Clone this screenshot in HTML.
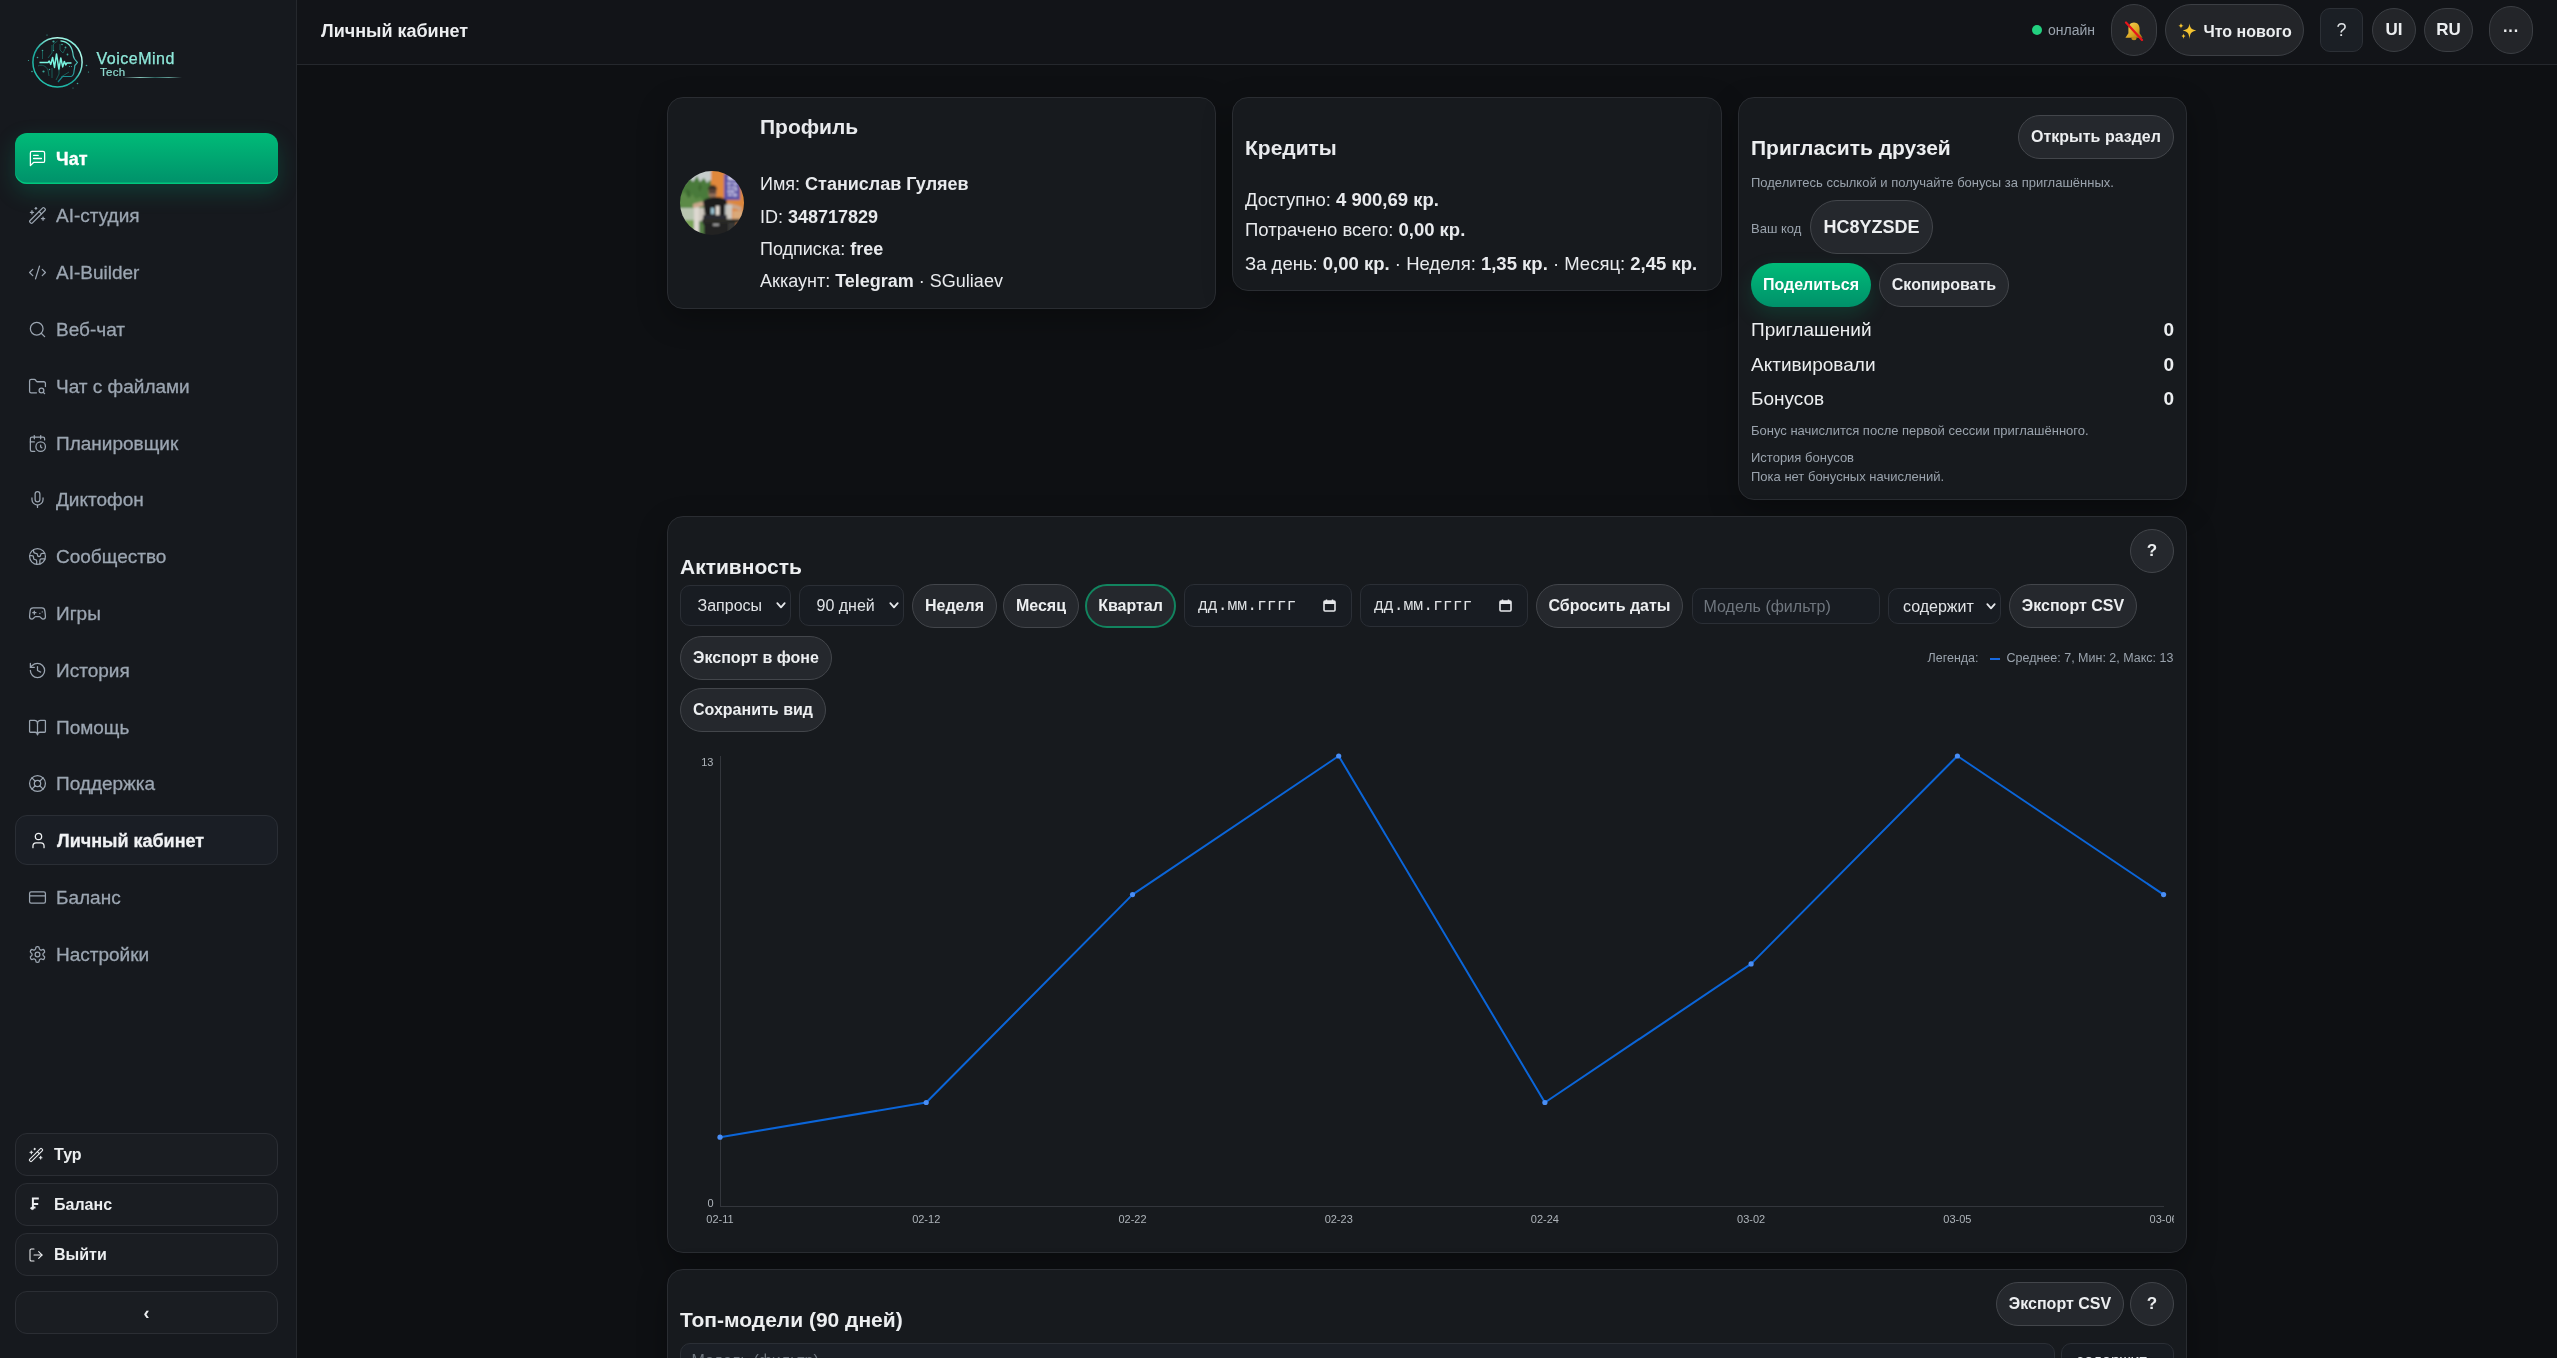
<!DOCTYPE html>
<html lang="ru">
<head>
<meta charset="utf-8">
<title>Личный кабинет</title>
<style>
*{box-sizing:border-box;margin:0;padding:0}
html,body{width:2557px;height:1358px;overflow:hidden}
body{-webkit-font-smoothing:antialiased;will-change:transform;background:#0e1013;font-family:"Liberation Sans",sans-serif;color:#e6e8eb;position:relative}
.abs{position:absolute}
#side{position:absolute;left:0;top:0;width:297px;height:1358px;background:#16191e;border-right:1px solid #25282d}
#head{position:absolute;left:297px;top:0;width:2260px;height:65px;background:#121418;border-bottom:1px solid #25282d}
.nav{position:absolute;left:15px;width:263px;height:50px;display:flex;align-items:center;font-size:19px;color:#9ba5b1;border-radius:12px}
.nav svg{position:absolute;left:13px;width:19px;height:19px;fill:none;stroke:currentColor;stroke-width:1.6;stroke-linecap:round;stroke-linejoin:round}
.nav span{position:absolute;left:41px;top:16px;line-height:1;white-space:nowrap;-webkit-text-stroke:.3px currentColor}
.nav.green span{top:16.5px}
.nav.act span{top:15.5px}
.nav.green{height:51px;background:linear-gradient(#00bb78,#00916a);color:#fff;font-weight:bold;font-size:18px;box-shadow:0 8px 22px rgba(0,170,120,.24),inset 0 -1.5px 0 #00c77d}
.nav.act{background:#1a1e25;border:1px solid #2a2e35;color:#f0f2f4;font-weight:bold;font-size:18px}
.sbtn{position:absolute;left:15px;width:263px;height:43px;border:1px solid #2b2e34;background:#1a1d22;border-radius:12px;color:#eceef0;font-weight:bold;font-size:16px}
.sbtn svg{position:absolute;left:12px;top:13px;width:16px;height:16px;fill:none;stroke:currentColor;stroke-width:1.6;stroke-linecap:round;stroke-linejoin:round}
.sbtn span{position:absolute;left:38px;top:12.5px;line-height:1;white-space:nowrap}
.card{position:absolute;background:#171a1e;border:1px solid #2a2d32;border-radius:16px;box-shadow:0 10px 30px rgba(0,0,0,.3)}
.pill{position:absolute;height:44px;border-radius:22px;background:#25282d;border:1px solid #43464b;color:#eceef0;font-weight:bold;font-size:16px;display:flex;align-items:center;justify-content:center;white-space:nowrap}
.sel{position:absolute;height:40px;border-radius:10px;background:#181c22;border:1px solid #2b2f36;color:#e0e3e6;font-size:16px;display:flex;align-items:center;white-space:nowrap}
.t{position:absolute;white-space:nowrap}
</style>
</head>
<body>
<div id="side"></div>
<div id="head"></div>
<svg class="abs" style="left:25px;top:30px" width="70" height="65" viewBox="0 0 70 65">
<defs><linearGradient id="lg1" x1="0.1" y1="1" x2="0.9" y2="0"><stop offset="0" stop-color="#27c9b4"/><stop offset=".45" stop-color="#1aa79b"/><stop offset=".8" stop-color="#b8fff0"/><stop offset="1" stop-color="#52d9c6"/></linearGradient>
<linearGradient id="lg2" x1="0" y1="0" x2="0" y2="1"><stop offset="0" stop-color="#7ef5e0"/><stop offset="1" stop-color="#0f7f86"/></linearGradient>
<filter id="glw" x="-20%" y="-20%" width="140%" height="140%"><feGaussianBlur stdDeviation=".35"/></filter></defs>
<g filter="url(#glw)">
<circle cx="32.5" cy="32.3" r="24.6" fill="none" stroke="url(#lg1)" stroke-width="1.5"/>
<path d="M35.5 10.8C43.5 11.5 47.5 17 48.2 25.5c.3 2.2 1.8 4.5 4.2 7-.9 1.6-2.4 2.2-2.7 3.5.2 2-.4 3-.6 4.5-.2 3.6-.8 5.5-3 6H37.5l-4.5 5.5" fill="none" stroke="url(#lg2)" stroke-width="1.2"/>
<path d="M14.5 32.6h8.5l1.2-1.6 1.6 3.4 1.8-7 1.9 10 2-13.5 2.4 15.5 1.9-11.5 1.9 9 1.6-5.5 1.5 3.5 1.2-2h4.5" fill="none" stroke="#79f3df" stroke-width="1.5" stroke-linejoin="round"/>
</g>
<g fill="#48d6c3" opacity=".75"><circle cx="28.5" cy="11.5" r="1.1"/><circle cx="17.5" cy="20.5" r=".8"/><circle cx="37" cy="14.5" r=".8"/><circle cx="40.5" cy="17.5" r=".9"/><circle cx="42.5" cy="24.5" r=".9"/><circle cx="12.5" cy="27.5" r=".8"/><circle cx="18.5" cy="41.5" r="1.1"/><circle cx="24.5" cy="39.5" r=".7"/><circle cx="34.5" cy="38.5" r=".7"/><circle cx="44.5" cy="36.5" r=".6"/><circle cx="46.5" cy="36.5" r=".6"/><circle cx="7" cy="41.5" r=".8"/><circle cx="61.5" cy="35.5" r=".8"/><circle cx="52.5" cy="53.5" r=".8"/><circle cx="28.5" cy="20.5" r=".7"/><circle cx="3.5" cy="30.5" r=".6"/><circle cx="63.5" cy="42" r=".6"/><circle cx="48" cy="58" r=".5"/><circle cx="22" cy="5" r=".6"/></g>
<g fill="none" stroke="#1b6f69" stroke-width=".9" opacity=".85"><path d="M17.5 21v8"/><path d="M28.5 20v-6l4-3"/><path d="M23 28l4-5v-8"/><path d="M35 14v6l3 3 2-4"/><path d="M13 36c4-2 8 0 10 4l1 6"/><path d="M27 38v10"/><path d="M34 39v5l-3 6"/><path d="M44 42l-8 5"/></g>
</svg>
<div class="t" style="left:96.5px;top:50.5px;font-size:16px;line-height:1;color:#8ee8da;letter-spacing:.5px;-webkit-text-stroke:.25px #8ee8da">VoiceMind</div>
<div class="t" style="left:100px;top:66.5px;font-size:11.5px;line-height:1;color:#8fdcd1;letter-spacing:.3px;-webkit-text-stroke:.2px #8fdcd1">Tech</div>
<div class="abs" style="left:122px;top:77px;width:60px;height:1px;background:linear-gradient(90deg,rgba(80,220,200,0),rgba(170,250,235,.75) 30%,rgba(80,220,200,.35) 55%,rgba(150,245,230,.6) 78%,rgba(80,220,200,0))"></div>
<div class="nav green" style="top:133.0px"><svg viewBox="0 0 24 24"><path d="M21 15a2 2 0 0 1-2 2H7l-4 4V5a2 2 0 0 1 2-2h14a2 2 0 0 1 2 2z"/><path d="M13 8H7"/><path d="M17 12H7"/></svg><span>Чат</span></div>
<div class="nav " style="top:190.0px"><svg viewBox="0 0 24 24"><path d="m21.64 3.64-1.28-1.28a1.21 1.21 0 0 0-1.72 0L2.36 18.64a1.21 1.21 0 0 0 0 1.72l1.28 1.28a1.2 1.2 0 0 0 1.72 0L21.640 5.36a1.2 1.2 0 0 0 0-1.72"/><path d="m14 7 3 3"/><path d="M5 6v4"/><path d="M19 14v4"/><path d="M10 2v2"/><path d="M7 8H3"/><path d="M21 16h-4"/><path d="M11 3H9"/></svg><span>AI-студия</span></div>
<div class="nav " style="top:247.0px"><svg viewBox="0 0 24 24"><path d="m18 16 4-4-4-4"/><path d="m6 8-4 4 4 4"/><path d="m14.5 4-5 16"/></svg><span>AI-Builder</span></div>
<div class="nav " style="top:304.0px"><svg viewBox="0 0 24 24"><circle cx="11" cy="11" r="8"/><path d="m21 21-4.3-4.3"/></svg><span>Веб-чат</span></div>
<div class="nav " style="top:361.0px"><svg viewBox="0 0 24 24"><circle cx="17" cy="17" r="3"/><path d="M10.7 20H4a2 2 0 0 1-2-2V5a2 2 0 0 1 2-2h3.9a2 2 0 0 1 1.69.9l.81 1.2a2 2 0 0 0 1.67.9H20a2 2 0 0 1 2 2v4.1"/><path d="m21 21-1.5-1.5"/></svg><span>Чат с файлами</span></div>
<div class="nav " style="top:418.0px"><svg viewBox="0 0 24 24"><path d="M21 7.5V6a2 2 0 0 0-2-2H5a2 2 0 0 0-2 2v14a2 2 0 0 0 2 2h3.5"/><path d="M16 2v4"/><path d="M8 2v4"/><path d="M3 10h5"/><path d="M17.5 17.5 16 16.3V14"/><circle cx="16" cy="16" r="6"/></svg><span>Планировщик</span></div>
<div class="nav " style="top:474.0px"><svg viewBox="0 0 24 24"><path d="M12 2a3 3 0 0 0-3 3v7a3 3 0 0 0 6 0V5a3 3 0 0 0-3-3Z"/><path d="M19 10v2a7 7 0 0 1-14 0v-2"/><line x1="12" x2="12" y1="19" y2="22"/></svg><span>Диктофон</span></div>
<div class="nav " style="top:531.0px"><svg viewBox="0 0 24 24"><path d="M21.54 15H17a2 2 0 0 0-2 2v4.54"/><path d="M7 3.34V5a3 3 0 0 0 3 3a2 2 0 0 1 2 2c0 1.1.9 2 2 2a2 2 0 0 0 2-2c0-1.1.9-2 2-2h3.17"/><path d="M11 21.95V18a2 2 0 0 0-2-2a2 2 0 0 1-2-2v-1a2 2 0 0 0-2-2H2.05"/><circle cx="12" cy="12" r="10"/></svg><span>Сообщество</span></div>
<div class="nav " style="top:588.0px"><svg viewBox="0 0 24 24"><line x1="6" x2="10" y1="11" y2="11"/><line x1="8" x2="8" y1="9" y2="13"/><line x1="15" x2="15.01" y1="12" y2="12"/><line x1="18" x2="18.01" y1="10" y2="10"/><path d="M17.32 5H6.68a4 4 0 0 0-3.978 3.59c-.006.052-.01.101-.017.152C2.604 9.416 2 14.456 2 16a3 3 0 0 0 3 3c1 0 1.5-.5 2-1l1.414-1.414A2 2 0 0 1 9.828 16h4.344a2 2 0 0 1 1.414.586L17 18c.5.5 1 1 2 1a3 3 0 0 0 3-3c0-1.545-.604-6.584-.685-7.258-.007-.05-.011-.1-.017-.151A4 4 0 0 0 17.32 5z"/></svg><span>Игры</span></div>
<div class="nav " style="top:645.0px"><svg viewBox="0 0 24 24"><path d="M3 12a9 9 0 1 0 9-9 9.750 9.750 0 0 0-6.74 2.74L3 8"/><path d="M3 3v5h5"/><path d="M12 7v5l4 2"/></svg><span>История</span></div>
<div class="nav " style="top:702.0px"><svg viewBox="0 0 24 24"><path d="M12 7v14"/><path d="M3 18a1 1 0 0 1-1-1V4a1 1 0 0 1 1-1h5a4 4 0 0 1 4 4 4 4 0 0 1 4-4h5a1 1 0 0 1 1 1v13a1 1 0 0 1-1 1h-6a3 3 0 0 0-3 3 3 3 0 0 0-3-3z"/></svg><span>Помощь</span></div>
<div class="nav " style="top:758.0px"><svg viewBox="0 0 24 24"><circle cx="12" cy="12" r="10"/><path d="m4.93 4.93 4.24 4.24"/><path d="m14.83 9.17 4.24-4.24"/><path d="m14.83 14.83 4.24 4.24"/><path d="m9.17 14.83-4.24 4.24"/><circle cx="12" cy="12" r="4"/></svg><span>Поддержка</span></div>
<div class="nav act" style="top:815.0px"><svg viewBox="0 0 24 24"><path d="M19 21v-2a4 4 0 0 0-4-4H9a4 4 0 0 0-4 4v2"/><circle cx="12" cy="7" r="4"/></svg><span>Личный кабинет</span></div>
<div class="nav " style="top:872.0px"><svg viewBox="0 0 24 24"><rect width="20" height="14" x="2" y="5" rx="2"/><line x1="2" x2="22" y1="10" y2="10"/></svg><span>Баланс</span></div>
<div class="nav " style="top:929.0px"><svg viewBox="0 0 24 24"><path d="M12.22 2h-.44a2 2 0 0 0-2 2v.18a2 2 0 0 1-1 1.73l-.43.25a2 2 0 0 1-2 0l-.15-.08a2 2 0 0 0-2.73.73l-.22.38a2 2 0 0 0 .73 2.73l.15.1a2 2 0 0 1 1 1.72v.51a2 2 0 0 1-1 1.74l-.15.09a2 2 0 0 0-.73 2.730l.22.38a2 2 0 0 0 2.73.73l.15-.08a2 2 0 0 1 2 0l.43.25a2 2 0 0 1 1 1.73V20a2 2 0 0 0 2 2h.44a2 2 0 0 0 2-2v-.18a2 2 0 0 1 1-1.73l.43-.25a2 2 0 0 1 2 0l.15.08a2 2 0 0 0 2.73-.73l.22-.39a2 2 0 0 0-.73-2.73l-.15-.08a2 2 0 0 1-1-1.74v-.5a2 2 0 0 1 1-1.74l.15-.09a2 2 0 0 0 .73-2.73l-.22-.38a2 2 0 0 0-2.73-.73l-.15.08a2 2 0 0 1-2 0l-.43-.25a2 2 0 0 1-1-1.73V4a2 2 0 0 0-2-2z"/><circle cx="12" cy="12" r="3"/></svg><span>Настройки</span></div>
<div class="sbtn" style="top:1133px"><svg viewBox="0 0 24 24"><path d="m21.64 3.64-1.28-1.28a1.21 1.21 0 0 0-1.72 0L2.36 18.64a1.21 1.21 0 0 0 0 1.72l1.28 1.28a1.2 1.2 0 0 0 1.72 0L21.640 5.36a1.2 1.2 0 0 0 0-1.72"/><path d="m14 7 3 3"/><path d="M5 6v4"/><path d="M19 14v4"/><path d="M10 2v2"/><path d="M7 8H3"/><path d="M21 16h-4"/><path d="M11 3H9"/></svg><span>Тур</span></div>
<div class="sbtn" style="top:1183px"><svg viewBox="0 0 16 16" style="stroke-width:2"><path d="M4.9 12.4V1.5h5.9M4.9 7h5.3M2.6 10.4l2.3 2M4.9 10.4h2.6" stroke-linecap="butt" stroke-linejoin="miter"/></svg><span>Баланс</span></div>
<div class="sbtn" style="top:1233px"><svg viewBox="0 0 24 24"><path d="M9 21H5a2 2 0 0 1-2-2V5a2 2 0 0 1 2-2h4"/><polyline points="16 17 21 12 16 7"/><line x1="21" x2="9" y1="12" y2="12"/></svg><span>Выйти</span></div>
<div class="sbtn" style="top:1291px"><span style="left:0;width:100%;text-align:center;top:11.5px;font-size:18px">&#8249;</span></div><div class="t" style="left:321px;top:22px;font-size:18px;line-height:1;font-weight:bold;color:#eceef0">Личный кабинет</div>
<div class="abs" style="left:2032px;top:25px;width:10px;height:10px;border-radius:50%;background:#22d07f"></div>
<div class="t" style="left:2048px;top:23px;font-size:14px;line-height:1;color:#9aa3ad">онлайн</div>
<div class="abs" style="left:2111px;top:4px;width:46px;height:52px;border-radius:23px;background:#232529;border:1px solid #3c3f44"></div>
<svg class="abs" style="left:2123px;top:21px" width="22" height="21" viewBox="0 0 22 21">
<defs><linearGradient id="bellg" x1="0" y1="0" x2="1" y2="1"><stop offset="0" stop-color="#f7d55a"/><stop offset=".6" stop-color="#d9a520"/><stop offset="1" stop-color="#9b6b10"/></linearGradient></defs>
<path d="M11 1.5c-3.6 0-5.6 2.8-5.6 6.4v4.4L2.4 16.8h17.2l-3-4.5V7.9c0-3.6-2-6.4-5.6-6.4z" fill="url(#bellg)"/>
<ellipse cx="11" cy="17.5" rx="2.6" ry="1.8" fill="#c08a18"/>
<path d="M3 1.5l16 17.5" stroke="#e8141a" stroke-width="2.2" stroke-linecap="round"/>
</svg>
<div class="abs" style="left:2165px;top:4px;width:139px;height:52px;border-radius:26px;background:#232529;border:1px solid #3c3f44"></div>
<svg class="abs" style="left:2178px;top:22px" width="20" height="19" viewBox="0 0 20 19">
<g fill="#f5c430"><path d="M11.5 1.5c.6 4.2 1.6 5.9 6.8 7.1-5.2 1.2-6.2 2.9-6.8 8.3-.6-5.4-1.6-7.1-6.8-8.3 5.2-1.2 6.2-2.9 6.8-7.1z"/><path d="M3 1c.3 1.7.7 2.3 2.6 2.8C3.7 4.3 3.3 4.9 3 6.8 2.7 4.9 2.3 4.3.4 3.8 2.3 3.3 2.7 2.7 3 1z"/><path d="M5.5 11.5c.3 1.6.7 2.2 2.4 2.6-1.7.4-2.1 1-2.4 2.8-.3-1.8-.7-2.4-2.4-2.8 1.7-.4 2.1-1 2.4-2.6z"/></g>
</svg>
<div class="t" style="left:2203.5px;top:23.5px;font-size:16px;line-height:1;font-weight:bold;color:#eceef0">Что нового</div>
<div class="abs" style="left:2320px;top:8px;width:43px;height:44px;border-radius:10px;background:#1b1f25;border:1px solid #2c3036;color:#e0e3e6;font-size:18px;line-height:42px;text-align:center">?</div>
<div class="abs" style="left:2372px;top:8px;width:44px;height:44px;border-radius:22px;background:#232529;border:1px solid #3c3f44;color:#eceef0;font-size:17px;font-weight:bold;line-height:42px;text-align:center">UI</div>
<div class="abs" style="left:2424px;top:8px;width:49px;height:44px;border-radius:22px;background:#232529;border:1px solid #3c3f44;color:#eceef0;font-size:17px;font-weight:bold;line-height:42px;text-align:center">RU</div>
<div class="abs" style="left:2489px;top:6px;width:44px;height:48px;border-radius:22px;background:#232529;border:1px solid #3c3f44;color:#eceef0;font-size:16px;font-weight:bold;line-height:48px;text-align:center">&middot;&middot;&middot;</div>
<div class="card" style="left:667px;top:97px;width:549px;height:212px"></div>
<svg class="abs" style="left:680px;top:171px" width="64" height="64" viewBox="0 0 64 64">
<defs><clipPath id="avc"><circle cx="32" cy="32" r="32"/></clipPath><filter id="avb" x="-10%" y="-10%" width="120%" height="120%"><feGaussianBlur stdDeviation=".8"/></filter></defs>
<g clip-path="url(#avc)"><g filter="url(#avb)">
<rect x="-2" y="-2" width="68" height="68" fill="#557f45"/>
<rect x="-2" y="-2" width="34" height="16" fill="#c6cdcc"/>
<path d="M-2 16l4-6 3 3 4-7 4 5 4-6 3 6 4-4 3 5 3-3 3 4V40H-2z" fill="#4a7a3b"/>
<path d="M0 24l4-3 3 4 5-2 4 5 4-2 4 3v15H0z" fill="#5b8a47"/>
<path d="M6 18l3 1 2 6-3 2zM20 12l2 4-2 5-2-4z" fill="#3d6a31"/>
<rect x="-2" y="37" width="17" height="13" fill="#b9c5b1"/>
<rect x="-2" y="49" width="17" height="17" fill="#79a358"/>
<rect x="31" y="-2" width="14" height="68" fill="#e1883a"/>
<rect x="44" y="-2" width="22" height="68" fill="#dc873c"/>
<rect x="44" y="3" width="16" height="26" fill="#5b53a5"/>
<rect x="48" y="5" width="8" height="4" fill="#e2e0f2" opacity=".85"/>
<g fill="#d8d5ee" opacity=".75"><rect x="47.5" y="11" width="3" height="3"/><rect x="51.5" y="11" width="2" height="2"/><rect x="54" y="11.5" width="3" height="3"/><rect x="48" y="15" width="2" height="3"/><rect x="51" y="15.5" width="4" height="2"/><rect x="55" y="16" width="2" height="4"/><rect x="47.5" y="19" width="3" height="3"/><rect x="51" y="19" width="3" height="3"/><rect x="48" y="23" width="4" height="2"/><rect x="53" y="22.5" width="4" height="3"/></g>
<rect x="14" y="35" width="5" height="31" fill="#ddd8d0"/>
<rect x="19" y="37" width="6" height="13" fill="#cdc7be"/>
<path d="M13 33c5-2 11-3 17-3l1 4c-6 1-12 2-18 3z" fill="#c9a68b"/>
<path d="M46 31l13 4-.5 3.5L45 36z" fill="#c9a68b"/>
<circle cx="59.5" cy="37.5" r="2.2" fill="#c9a68b"/>
<path d="M28.5 19.5c0-3 1.8-5 4-5s4 2 4 5v4c0 2-1.8 3.8-4 3.8s-4-1.8-4-3.8z" fill="#8f6d58"/>
<path d="M28 18.5c0-3 2-4.5 4.5-4.5s4.5 1.5 4.5 4.5l-1 1h-7z" fill="#3b2d25"/>
<rect x="29" y="20.5" width="7" height="1.6" fill="#2a2020"/>
<path d="M23 30c3-3 8-4 13-4 5 0 9 1 11 4l-1 15H25z" fill="#1d1d1f"/>
<rect x="31" y="37" width="3" height="6" fill="#9fc6d6"/>
<rect x="36" y="35" width="3.5" height="13" fill="#e6dfd8"/>
<rect x="45" y="34" width="7" height="15" fill="#c9d3d6" opacity=".85"/>
<rect x="53" y="40" width="11" height="11" fill="#d9b48e" opacity=".75"/>
<rect x="23" y="44" width="24" height="10" fill="#2c2c30"/>
<rect x="22" y="48" width="44" height="4" fill="#2b2927"/>
<rect x="24" y="52" width="24" height="14" fill="#242322"/>
<rect x="33" y="53" width="6" height="1.6" fill="#b8b8b8"/>
<rect x="48" y="52" width="8" height="14" fill="#393735"/>
<rect x="56" y="52" width="10" height="14" fill="#d6843d"/>
</g></g>
</svg>
<div class="t" style="left:760px;top:115.5px;font-size:21px;line-height:1;font-weight:bold;color:#e8eaed">Профиль</div>
<div class="t" style="left:760px;top:175.3px;font-size:18px;line-height:1;color:#e8eaed">Имя: <b>Станислав Гуляев</b></div>
<div class="t" style="left:760px;top:207.7px;font-size:18px;line-height:1;color:#e8eaed">ID: <b>348717829</b></div>
<div class="t" style="left:760px;top:240.1px;font-size:18px;line-height:1;color:#e8eaed">Подписка: <b>free</b></div>
<div class="t" style="left:760px;top:272.3px;font-size:18px;line-height:1;color:#e8eaed">Аккаунт: <b>Telegram</b> · SGuliaev</div>

<div class="card" style="left:1232px;top:97px;width:490px;height:194px"></div>
<div class="t" style="left:1245px;top:137.4px;font-size:21px;line-height:1;font-weight:bold;color:#e8eaed">Кредиты</div>
<div class="t" style="left:1245px;top:191.4px;font-size:18.5px;line-height:1;color:#e8eaed">Доступно: <b>4 900,69 кр.</b></div>
<div class="t" style="left:1245px;top:220.5px;font-size:18.5px;line-height:1;color:#e8eaed">Потрачено всего: <b>0,00 кр.</b></div>
<div class="t" style="left:1245px;top:254.5px;font-size:18.5px;line-height:1;color:#e8eaed">За день: <b>0,00 кр.</b> · Неделя: <b>1,35 кр.</b> · Месяц: <b>2,45 кр.</b></div>

<div class="card" style="left:1738px;top:97px;width:449px;height:403px"></div>
<div class="t" style="left:1751px;top:137.2px;font-size:21px;line-height:1;font-weight:bold;color:#eceef0">Пригласить друзей</div>
<div class="pill" style="left:2018px;top:115px;width:156px">Открыть раздел</div>
<div class="t" style="left:1751px;top:176px;font-size:13px;line-height:1;color:#9aa3ad">Поделитесь ссылкой и получайте бонусы за приглашённых.</div>
<div class="t" style="left:1751px;top:221.5px;font-size:13px;line-height:1;color:#9aa3ad">Ваш код</div>
<div class="pill" style="left:1810px;top:200px;width:123px;height:54px;border-radius:27px;font-size:18px">HC8YZSDE</div>
<div class="pill" style="left:1751px;top:263px;width:120px;border:none;background:linear-gradient(#00bb78,#00916a);color:#fff;box-shadow:0 8px 20px rgba(0,170,110,.2)">Поделиться</div>
<div class="pill" style="left:1879px;top:263px;width:130px">Скопировать</div>
<div class="t" style="left:1751px;top:320px;font-size:19px;line-height:1;color:#eceef0">Приглашений</div>
<div class="t" style="left:2100px;width:74px;text-align:right;top:320px;font-size:19px;line-height:1;font-weight:bold;color:#eceef0">0</div>
<div class="t" style="left:1751px;top:354.7px;font-size:19px;line-height:1;color:#eceef0">Активировали</div>
<div class="t" style="left:2100px;width:74px;text-align:right;top:354.7px;font-size:19px;line-height:1;font-weight:bold;color:#eceef0">0</div>
<div class="t" style="left:1751px;top:389px;font-size:19px;line-height:1;color:#eceef0">Бонусов</div>
<div class="t" style="left:2100px;width:74px;text-align:right;top:389px;font-size:19px;line-height:1;font-weight:bold;color:#eceef0">0</div>
<div class="t" style="left:1751px;top:424px;font-size:13px;line-height:1;color:#9aa3ad">Бонус начислится после первой сессии приглашённого.</div>
<div class="t" style="left:1751px;top:450.8px;font-size:13px;line-height:1;color:#9aa3ad">История бонусов</div>
<div class="t" style="left:1751px;top:470px;font-size:13px;line-height:1;color:#9aa3ad">Пока нет бонусных начислений.</div>
<div class="card" style="left:667px;top:516px;width:1520px;height:737px"></div>
<div class="t" style="left:680px;top:555.5px;font-size:21px;line-height:1;font-weight:bold;color:#eceef0">Активность</div>
<div class="pill" style="left:2130px;top:529px;width:44px;font-size:17px">?</div>
<div class="sel" style="left:680px;top:585px;width:111px;height:41px"><span class="t" style="left:16.5px;top:12px;line-height:1">Запросы</span><svg class="abs" style="right:4.5px;top:15px" width="10" height="9" viewBox="0 0 10 9"><path d="M1.3 2.2 5 6.4 8.7 2.2" fill="none" stroke="#e6e8eb" stroke-width="1.8" stroke-linecap="round" stroke-linejoin="round"/></svg></div>
<div class="sel" style="left:799px;top:585px;width:105px;height:41px"><span class="t" style="left:16.5px;top:12px;line-height:1">90 дней</span><svg class="abs" style="right:4.5px;top:15px" width="10" height="9" viewBox="0 0 10 9"><path d="M1.3 2.2 5 6.4 8.7 2.2" fill="none" stroke="#e6e8eb" stroke-width="1.8" stroke-linecap="round" stroke-linejoin="round"/></svg></div>
<div class="pill" style="left:912px;top:584px;width:85px">Неделя</div>
<div class="pill" style="left:1003px;top:584px;width:76px">Месяц</div>
<div class="pill" style="left:1085px;top:584px;width:91px;border:2px solid #12845f">Квартал</div>
<div class="sel" style="left:1184px;top:584px;width:168px;height:43px"><span class="t" style="left:13px;top:13px;line-height:1;font-family:'Liberation Mono',monospace;font-size:16.4px;color:#e0e3e6">дд.мм.гггг</span><svg class="abs" style="left:138px;top:14px" width="13" height="13" viewBox="0 0 13 13"><rect x="1" y="2" width="11" height="10" rx="1" fill="none" stroke="#e6e8eb" stroke-width="1.6"/><rect x="1" y="2" width="11" height="3" fill="#e6e8eb"/><path d="M3.5 0.5v2M9.5 0.5v2" stroke="#e6e8eb" stroke-width="1.5"/></svg></div>
<div class="sel" style="left:1360px;top:584px;width:168px;height:43px"><span class="t" style="left:13px;top:13px;line-height:1;font-family:'Liberation Mono',monospace;font-size:16.4px;color:#e0e3e6">дд.мм.гггг</span><svg class="abs" style="left:138px;top:14px" width="13" height="13" viewBox="0 0 13 13"><rect x="1" y="2" width="11" height="10" rx="1" fill="none" stroke="#e6e8eb" stroke-width="1.6"/><rect x="1" y="2" width="11" height="3" fill="#e6e8eb"/><path d="M3.5 0.5v2M9.5 0.5v2" stroke="#e6e8eb" stroke-width="1.5"/></svg></div>
<div class="pill" style="left:1536px;top:584px;width:147px">Сбросить даты</div>
<div class="sel" style="left:1692px;top:588px;width:188px;height:36px"><span class="t" style="left:10.5px;top:9.5px;line-height:1;color:#6f767e">Модель (фильтр)</span></div>
<div class="sel" style="left:1888px;top:588px;width:113px;height:36px"><span class="t" style="left:14px;top:9.5px;line-height:1">содержит</span><svg class="abs" style="right:4.5px;top:12.5px" width="10" height="9" viewBox="0 0 10 9"><path d="M1.3 2.2 5 6.4 8.7 2.2" fill="none" stroke="#e6e8eb" stroke-width="1.8" stroke-linecap="round" stroke-linejoin="round"/></svg></div>
<div class="pill" style="left:2009px;top:584px;width:128px">Экспорт CSV</div>
<div class="pill" style="left:680px;top:636px;width:152px">Экспорт в фоне</div>
<div class="t" style="left:1927.5px;top:652px;font-size:12.5px;line-height:1;color:#9aa3ad">Легенда:</div><div class="abs" style="left:1990px;top:657.5px;width:10px;height:2px;background:#1769e0"></div><div class="t" style="left:2006.5px;top:652px;font-size:12.5px;line-height:1;color:#9aa3ad">Среднее: 7, Мин: 2, Макс: 13</div>
<div class="pill" style="left:680px;top:688px;width:146px">Сохранить вид</div>
<svg class="abs" style="left:667px;top:740px" width="1520" height="500" viewBox="667 740 1520 500"><defs><clipPath id="chc"><rect x="667" y="740" width="1507" height="500"/></clipPath></defs><line x1="720.5" y1="756" x2="720.5" y2="1207" stroke="#33363c" stroke-width="1"/><line x1="720" y1="1206.5" x2="2164" y2="1206.5" stroke="#33363c" stroke-width="1"/><text x="713.5" y="766" text-anchor="end" font-family="Liberation Sans" font-size="11" fill="#aeb4ba">13</text><text x="713.5" y="1207" text-anchor="end" font-family="Liberation Sans" font-size="11" fill="#aeb4ba">0</text><g clip-path="url(#chc)"><text x="720.0" y="1223" text-anchor="middle" font-family="Liberation Sans" font-size="11" fill="#aeb4ba">02-11</text><text x="926.2" y="1223" text-anchor="middle" font-family="Liberation Sans" font-size="11" fill="#aeb4ba">02-12</text><text x="1132.5" y="1223" text-anchor="middle" font-family="Liberation Sans" font-size="11" fill="#aeb4ba">02-22</text><text x="1338.7" y="1223" text-anchor="middle" font-family="Liberation Sans" font-size="11" fill="#aeb4ba">02-23</text><text x="1544.9" y="1223" text-anchor="middle" font-family="Liberation Sans" font-size="11" fill="#aeb4ba">02-24</text><text x="1751.1" y="1223" text-anchor="middle" font-family="Liberation Sans" font-size="11" fill="#aeb4ba">03-02</text><text x="1957.4" y="1223" text-anchor="middle" font-family="Liberation Sans" font-size="11" fill="#aeb4ba">03-05</text><text x="2163.6" y="1223" text-anchor="middle" font-family="Liberation Sans" font-size="11" fill="#aeb4ba">03-06</text></g><path d="M720.0 1137.2 L926.2 1102.5 L1132.5 894.6 L1338.7 756.0 L1544.9 1102.5 L1751.1 963.9 L1957.4 756.0 L2163.6 894.6" fill="none" stroke="#0b65d8" stroke-width="2" stroke-linejoin="round"/><circle cx="720.0" cy="1137.2" r="2.6" fill="#4a8ef5"/><circle cx="926.2" cy="1102.5" r="2.6" fill="#4a8ef5"/><circle cx="1132.5" cy="894.6" r="2.6" fill="#4a8ef5"/><circle cx="1338.7" cy="756.0" r="2.6" fill="#4a8ef5"/><circle cx="1544.9" cy="1102.5" r="2.6" fill="#4a8ef5"/><circle cx="1751.1" cy="963.9" r="2.6" fill="#4a8ef5"/><circle cx="1957.4" cy="756.0" r="2.6" fill="#4a8ef5"/><circle cx="2163.6" cy="894.6" r="2.6" fill="#4a8ef5"/></svg>
<div class="card" style="left:667px;top:1269px;width:1520px;height:200px"></div>
<div class="t" style="left:680px;top:1309px;font-size:21px;line-height:1;font-weight:bold;color:#eceef0">Топ-модели (90 дней)</div>
<div class="pill" style="left:1996px;top:1282px;width:128px">Экспорт CSV</div>
<div class="pill" style="left:2130px;top:1282px;width:44px;font-size:17px">?</div>
<div class="sel" style="left:680px;top:1343px;width:1375px;height:36px;background:#1b1f26"><span class="t" style="left:10.5px;top:8.5px;line-height:1;color:#6f767e">Модель (фильтр)</span></div>
<div class="sel" style="left:2061px;top:1343px;width:113px;height:36px"><span class="t" style="left:14px;top:9px;line-height:1">содержит</span></div>
</body>
</html>
